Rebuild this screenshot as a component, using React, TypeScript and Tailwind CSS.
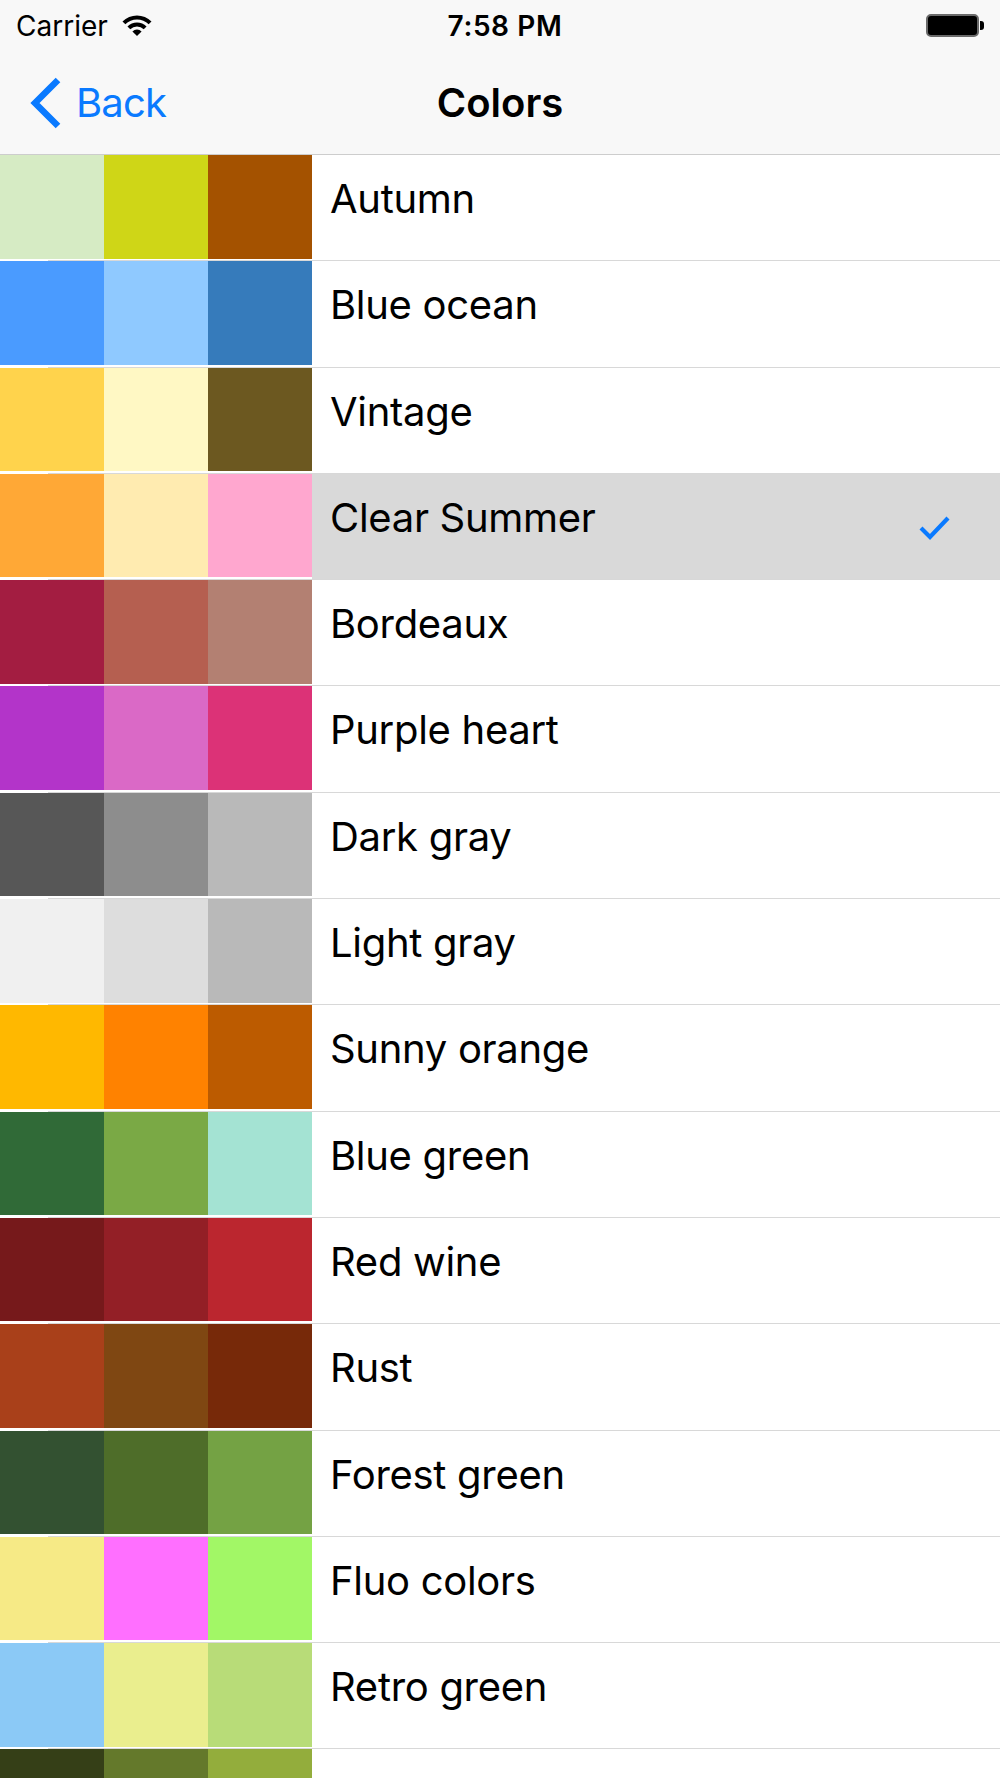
import React from "react";

type Row = { name: string; colors: [string, string, string]; selected?: boolean };

const rows: Row[] = [
  { name: "Autumn", colors: ["#d6ebc4", "#cfd617", "#a45200"] },
  { name: "Blue ocean", colors: ["#4a9bff", "#8fc9ff", "#367bbb"] },
  { name: "Vintage", colors: ["#ffd34c", "#fff8c4", "#6c5820"] },
  { name: "Clear Summer", colors: ["#ffa836", "#ffebb0", "#ffa7cf"], selected: true },
  { name: "Bordeaux", colors: ["#a31d41", "#b55f50", "#b38072"] },
  { name: "Purple heart", colors: ["#b334c9", "#da69c6", "#dc3277"] },
  { name: "Dark gray", colors: ["#575757", "#8d8d8d", "#b9b9b9"] },
  { name: "Light gray", colors: ["#f0f0f0", "#dddddd", "#b9b9b9"] },
  { name: "Sunny orange", colors: ["#ffb800", "#ff8200", "#bc5b00"] },
  { name: "Blue green", colors: ["#306a37", "#7aa945", "#a4e3d3"] },
  { name: "Red wine", colors: ["#76191b", "#931f26", "#bb262f"] },
  { name: "Rust", colors: ["#a9401a", "#7f4712", "#772909"] },
  { name: "Forest green", colors: ["#335131", "#4e6d29", "#74a244"] },
  { name: "Fluo colors", colors: ["#f6ea86", "#ff6fff", "#a2f766"] },
  { name: "Retro green", colors: ["#8bc9f6", "#eaee8e", "#b8dc78"] },
  { name: "", colors: ["#353f17", "#64792b", "#93ad3c"] },
];

function Wifi() {
  return (
    <svg width="30" height="21" viewBox="0 0 30 21" className="block">
      <path d="M0.5 6.5 A20.5 20.5 0 0 1 29.5 6.5 L26.67 9.33 A16.5 16.5 0 0 0 3.33 9.33 Z" fill="#000" />
      <path d="M5.45 11.45 A13.5 13.5 0 0 1 24.55 11.45 L21.72 14.28 A9.5 9.5 0 0 0 8.28 14.28 Z" fill="#000" />
      <path d="M15 21 L10.4 16.4 A6.5 6.5 0 0 1 19.6 16.4 Z" fill="#000" />
    </svg>
  );
}

function Chevron() {
  return (
    <svg width="32" height="52" viewBox="0 0 32 52" className="block">
      <polyline points="28,3 5,26 28,49" fill="none" stroke="#0a7aff" strokeWidth="6.5" strokeLinejoin="miter" />
    </svg>
  );
}

function Check() {
  return (
    <svg width="32" height="26" viewBox="0 0 32 26" className="block">
      <polyline points="3,14 12,23 30,4" fill="none" stroke="#0a7aff" strokeWidth="4.2" strokeLinejoin="miter" />
    </svg>
  );
}

export default function App() {
  return (
    <div className="w-[1000px] h-[1778px] overflow-hidden bg-white text-black font-['Inter','Noto_Sans',sans-serif]">
      <header className="h-[155px] bg-[#f8f8f8] border-b border-[#cdcdcd] flex flex-col">
        <div className="h-[51px] grid grid-cols-[1fr_auto_1fr] items-center px-[16px]">
          <div className="flex items-center gap-[14px]">
            <span className="text-[28px] leading-[34px]">Carrier</span>
            <Wifi />
          </div>
          <span className="text-[28px] leading-[34px] font-semibold tracking-[0.6px] ml-[10px]">7:58 PM</span>
          <div className="flex items-center justify-end">
            <div className="w-[53px] h-[23px] rounded-[5px] border-[2px] border-[#6a6a6a] bg-black" />
            <div className="w-[4px] h-[9px] rounded-r-[3px] bg-black ml-[1px]" />
          </div>
        </div>
        <div className="h-[103px] grid grid-cols-[1fr_auto_1fr] items-center">
          <div className="flex items-center pl-[30px] gap-[14px]">
            <Chevron />
            <span className="text-[40px] leading-[48px] tracking-[-0.8px] text-[#0a7aff]">Back</span>
          </div>
          <span className="text-[40px] leading-[48px] font-semibold">Colors</span>
          <div />
        </div>
      </header>
      {rows.map((r, i) => (
        <div key={i} className="h-[106.3px] flex flex-col">
          <div className="h-[105.3px] flex">
            <div className="w-[312px] flex items-start bg-white">
              {r.colors.map((c, j) => (
                <div key={j} className="w-[104px] h-[103.5px]" style={{ backgroundColor: c }} />
              ))}
            </div>
            <div
              className={
                "flex-1 flex items-start pl-[18px] pt-[20px] pr-[50px] " +
                (r.selected ? "bg-[#d9d9d9]" : "bg-white")
              }
            >
              <span className="text-[40px] leading-[48px] tracking-[-0.3px]">{r.name}</span>
              {r.selected && (
                <div className="ml-auto mt-[20px]">
                  <Check />
                </div>
              )}
            </div>
          </div>
          <div className="h-px ml-[48px] bg-[#d8d8d8]" />
        </div>
      ))}
    </div>
  );
}
